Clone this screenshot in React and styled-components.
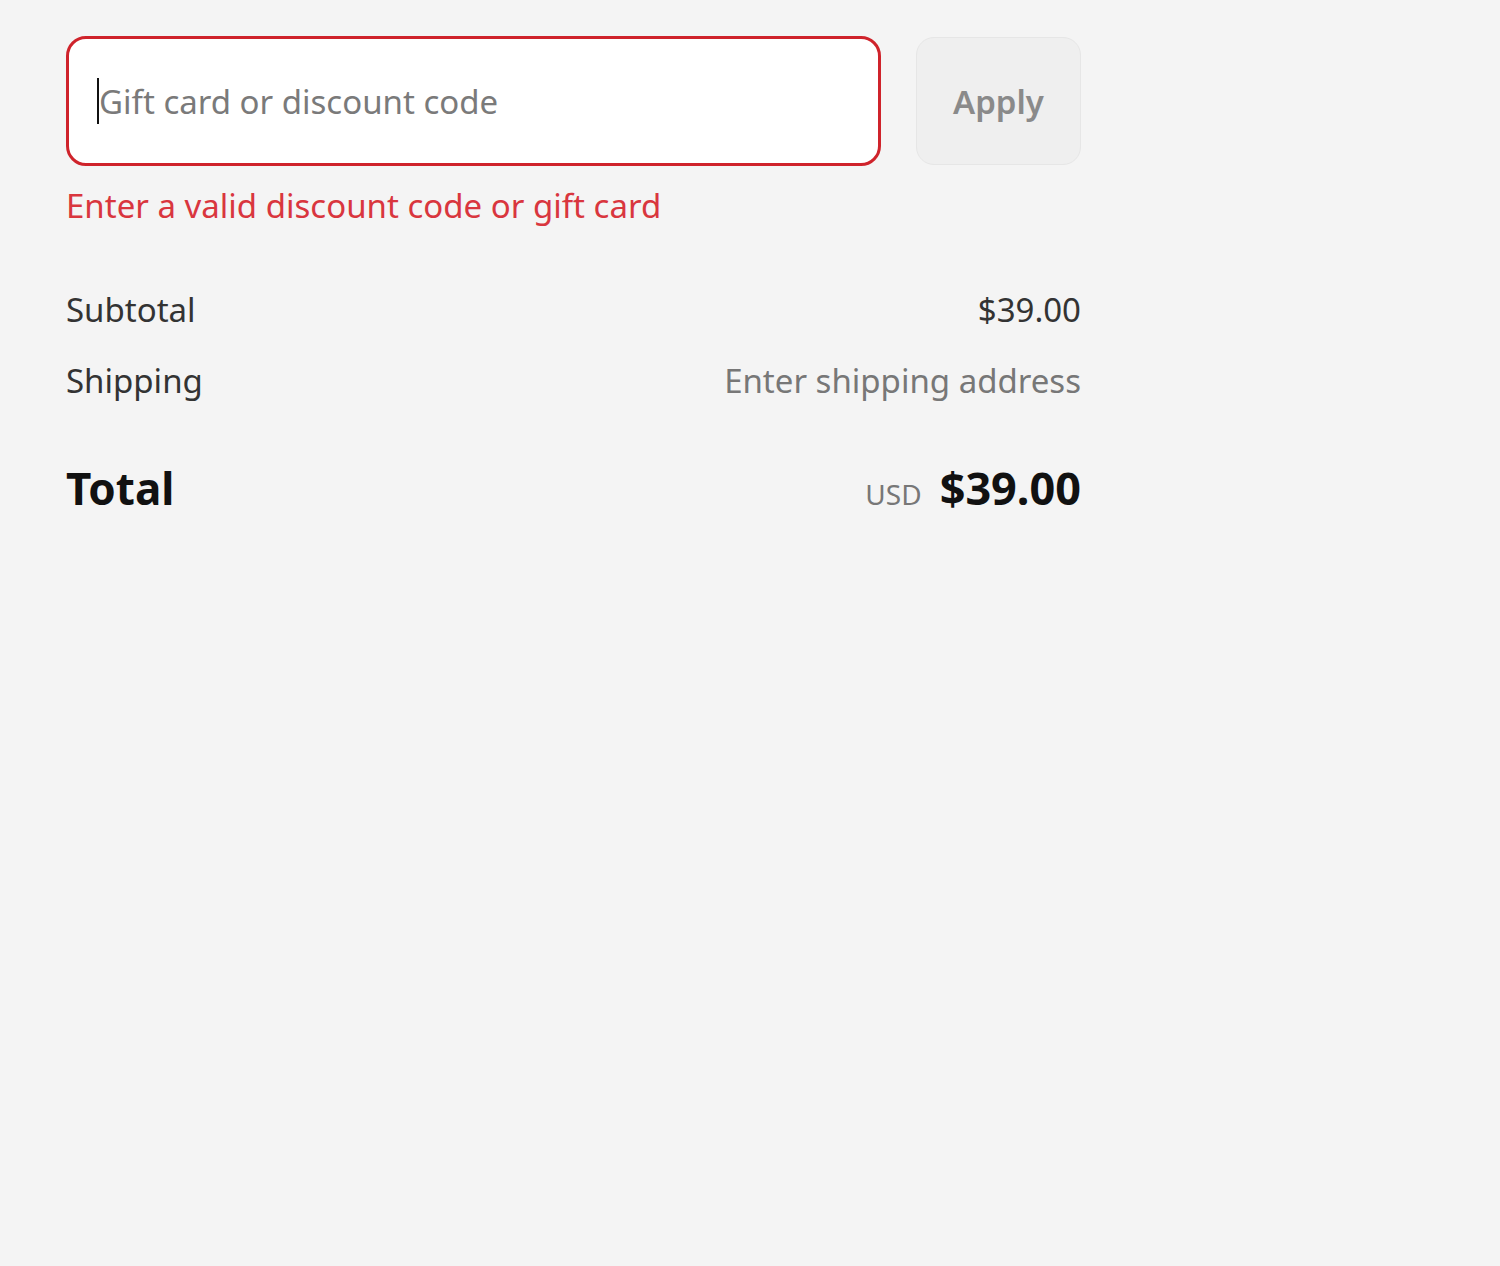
import React from "react";
import styled, { createGlobalStyle } from "styled-components";

const GlobalStyle = createGlobalStyle`
  html, body {
    margin: 0;
    padding: 0;
    background: #f4f4f4;
    font-family: "Noto Sans", "Open Sans", sans-serif;
  }
`;

const Page = styled.div`
  min-height: 1266px;
  padding: 36px 0 0 66px;
  box-sizing: border-box;
`;

const Summary = styled.div`
  width: 1015px;
`;

const DiscountRow = styled.div`
  display: flex;
  gap: 35px;
`;

const Field = styled.div`
  position: relative;
  flex: 1;
`;

const CodeInput = styled.input`
  width: 100%;
  height: 130px;
  box-sizing: border-box;
  border: 3px solid #cf232b;
  border-radius: 20px;
  background: #fff;
  padding: 0 30px;
  font-family: inherit;
  font-size: 33px;
  color: #333;
  outline: none;

  &::placeholder {
    color: #7a7a7a;
  }
`;

const Caret = styled.span`
  position: absolute;
  left: 31px;
  top: 42px;
  width: 2px;
  height: 46px;
  background: #111;
`;

const ApplyButton = styled.button`
  width: 165px;
  height: 128px;
  margin-top: 1px;
  border: 1px solid #e6e6e6;
  border-radius: 18px;
  background: #efefef;
  color: #8a8a8a;
  font-family: inherit;
  font-size: 33px;
  font-weight: 600;
`;

const ErrorText = styled.div`
  color: #d9363e;
  font-size: 33px;
  line-height: 44px;
  margin-top: 18px;
`;

const Lines = styled.div`
  margin-top: 60px;
  display: flex;
  flex-direction: column;
  gap: 27px;
`;

const Line = styled.div`
  display: flex;
  justify-content: space-between;
  align-items: baseline;
  font-size: 33px;
  line-height: 44px;
  color: #333;
`;

const Muted = styled.span`
  color: #777;
`;

const TotalRow = styled.div`
  display: flex;
  justify-content: space-between;
  align-items: baseline;
  margin-top: 54px;
  color: #111;
`;

const TotalLabel = styled.span`
  font-size: 44px;
  font-weight: 700;
`;

const Amount = styled.span`
  display: flex;
  align-items: baseline;
  gap: 18px;
`;

const Currency = styled.span`
  font-size: 28px;
  color: #777;
`;

const TotalValue = styled.span`
  font-size: 45px;
  font-weight: 700;
`;

export default function App() {
  return (
    <>
      <GlobalStyle />
      <Page>
        <Summary>
          <DiscountRow>
            <Field>
              <CodeInput placeholder="Gift card or discount code" />
              <Caret />
            </Field>
            <ApplyButton>Apply</ApplyButton>
          </DiscountRow>
          <ErrorText>Enter a valid discount code or gift card</ErrorText>

          <Lines>
            <Line>
              <span>Subtotal</span>
              <span>$39.00</span>
            </Line>
            <Line>
              <span>Shipping</span>
              <Muted>Enter shipping address</Muted>
            </Line>
          </Lines>

          <TotalRow>
            <TotalLabel>Total</TotalLabel>
            <Amount>
              <Currency>USD</Currency>
              <TotalValue>$39.00</TotalValue>
            </Amount>
          </TotalRow>
        </Summary>
      </Page>
    </>
  );
}
